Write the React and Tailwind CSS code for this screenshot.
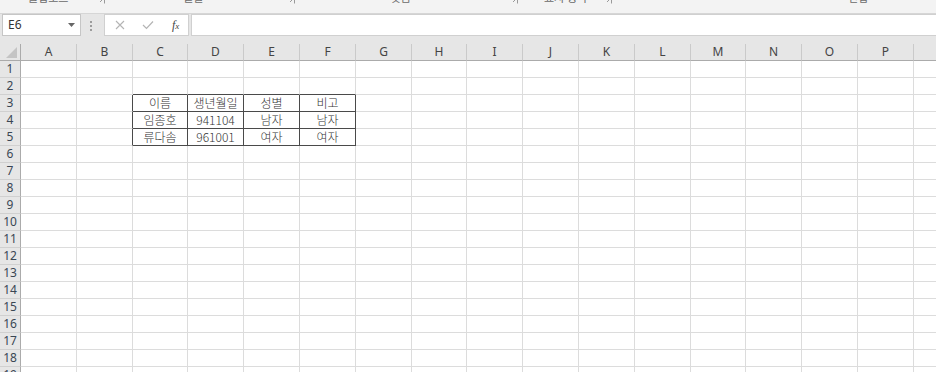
import React from "react";

const COLS = ["A","B","C","D","E","F","G","H","I","J","K","L","M","N","O","P"];
const W = ["w-[56px]","w-[56px]","w-[55px]","w-[56px]","w-[56px]","w-[56px]","w-[56px]","w-[55px]","w-[56px]","w-[56px]","w-[56px]","w-[56px]","w-[55px]","w-[56px]","w-[56px]","w-[56px]"];

const DATA = {
  3: ["이름", "생년월일", "성별", "비고"],
  4: ["임종호", "941104", "남자", "남자"],
  5: ["류다솜", "961001", "여자", "여자"],
};

function Launcher() {
  return (
    <svg width="7" height="7" viewBox="0 0 7 7" className="block">
      <path d="M0.5 0.5H6.5V6.5" fill="none" stroke="#9a9a9a" strokeWidth="1" />
      <path d="M2 5L5.5 1.5" stroke="#9a9a9a" strokeWidth="1" />
    </svg>
  );
}

function Row({ r }) {
  return (
    <div className="flex h-[17px]">
      <div className="w-[21px] shrink-0 h-[17px] bg-[#e6e6e6] border-r border-b border-r-[#ababab] border-b-[#d0d0d0] flex items-center justify-center text-[12px] text-[#3a4654] leading-none">
        {r}
      </div>
      {COLS.map((c, i) => {
        const inTableCol = i >= 2 && i <= 5;
        const darkRight = r >= 3 && r <= 5 && i >= 1 && i <= 5;
        const darkBottom = r >= 2 && r <= 5 && inTableCol;
        const text = DATA[r] && inTableCol ? DATA[r][i - 2] : null;
        return (
          <div
            key={c}
            className={
              W[i] +
              " shrink-0 h-[17px] border-r border-b bg-white flex items-center justify-center leading-none text-[#333] font-light text-[12px] " +
              (darkRight ? "border-r-[#4a4a4a] " : "border-r-[#dcdcdc] ") +
              (darkBottom ? "border-b-[#4a4a4a]" : "border-b-[#dcdcdc]")
            }
            style={{ fontFamily: '"Noto Sans CJK KR", "Noto Sans", sans-serif' }}
          >
            {text}
          </div>
        );
      })}
      <div className="flex-1 h-[17px] bg-white border-b border-b-[#dcdcdc]" />
    </div>
  );
}

export default function App() {
  const rows = Array.from({ length: 19 }, (_, i) => i + 1);
  return (
    <div
      className="w-[936px] h-[372px] overflow-hidden bg-white"
      style={{ fontFamily: '"Noto Sans", "Noto Sans CJK KR", sans-serif' }}
    >
      {/* ribbon remnant */}
      <div className="h-[14px] bg-[#f3f3f3] border-b border-b-[#d6d6d6] overflow-hidden">
        <div className="flex items-start -mt-[9px] text-[11px] leading-[13px] text-[#6a6a6a]" style={{ fontFamily: '"Noto Sans CJK KR", sans-serif' }}>
          <span className="ml-[28px]">클립보드</span>
          <span className="ml-[30px] mt-[6px]"><Launcher /></span>
          <span className="ml-[78px]">글꼴</span>
          <span className="ml-[84px] mt-[6px]"><Launcher /></span>
          <span className="ml-[96px]">맞춤</span>
          <span className="ml-[100px] mt-[6px]"><Launcher /></span>
          <span className="ml-[26px]">표시 형식</span>
          <span className="ml-[18px] mt-[6px]"><Launcher /></span>
          <span className="ml-[236px]">편집</span>
        </div>
      </div>

      {/* formula bar */}
      <div className="h-[30px] bg-[#e6e6e6] flex items-start">
        <div className="ml-[2px] w-[79px] h-[22px] bg-white border border-[#c6c6c6] flex items-center justify-between px-[5px]">
          <span className="text-[12px] text-[#333] leading-none">E6</span>
          <svg width="7" height="4" viewBox="0 0 7 4"><path d="M0 0H7L3.5 4Z" fill="#666" /></svg>
        </div>
        <div className="ml-[9px] mt-[7px] flex flex-col gap-[2px]">
          <div className="w-[2px] h-[2px] bg-[#9c9c9c]" />
          <div className="w-[2px] h-[2px] bg-[#9c9c9c]" />
          <div className="w-[2px] h-[2px] bg-[#9c9c9c]" />
        </div>
        <div className="ml-[12px] w-[85px] h-[22px] bg-white border border-[#d0d0d0] flex items-center">
          <svg width="10" height="10" viewBox="0 0 10 10" className="ml-[10px]">
            <path d="M1 1L9 9M9 1L1 9" stroke="#b4b4b4" strokeWidth="1.1" />
          </svg>
          <svg width="12" height="10" viewBox="0 0 12 10" className="ml-[17px]">
            <path d="M1 5L4.5 8.5L11 1.5" fill="none" stroke="#b4b4b4" strokeWidth="1.2" />
          </svg>
          <span
            className="ml-[18px] text-[12px] italic text-[#444] leading-none"
            style={{ fontFamily: '"Liberation Serif", serif' }}
          >
            f<span className="text-[9px]">x</span>
          </span>
        </div>
        <div className="ml-[2px] flex-1 h-[22px] bg-white border border-[#d0d0d0] border-r-0" />
      </div>

      {/* column header */}
      <div className="flex h-[17px] bg-[#e6e6e6]">
        <div className="w-[21px] shrink-0 h-[17px] border-r border-b border-r-[#ababab] border-b-[#ababab] flex items-end justify-end pr-[3px] pb-[2px]">
          <svg width="11" height="11" viewBox="0 0 11 11"><path d="M11 0V11H0Z" fill="#c4c4c4" /></svg>
        </div>
        {COLS.map((c, i) => (
          <div
            key={c}
            className={W[i] + " shrink-0 h-[17px] border-r border-b border-r-[#cacaca] border-b-[#ababab] flex items-center justify-center text-[12px] text-[#444] leading-none"}
          >
            {c}
          </div>
        ))}
        <div className="flex-1 h-[17px] border-b border-b-[#ababab]" />
      </div>

      {rows.map((r) => (
        <Row key={r} r={r} />
      ))}
    </div>
  );
}
